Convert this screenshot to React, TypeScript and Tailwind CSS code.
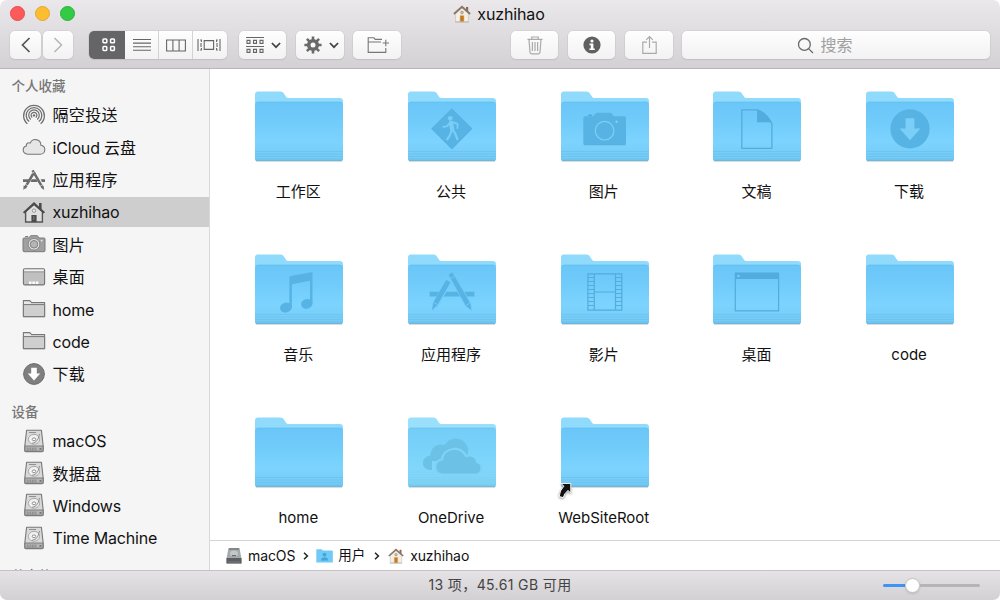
import type { ReactNode } from "react";

const G = "#6b6b6b";

function FolderBase({ light, id, children }: { light?: boolean; id: string; children?: ReactNode }) {
  return (
    <svg width="88" height="74" viewBox="0 0 88 74" className="block overflow-visible">
      <defs>
        <linearGradient id={id} x1="0" y1="0" x2="0" y2="1">
          <stop offset="0" stopColor={light ? "#74cdf7" : "#6ac6f8"} />
          <stop offset="0.3" stopColor={light ? "#77d1f9" : "#70cbfa"} />
          <stop offset="0.68" stopColor={light ? "#80d7fb" : "#7cd3fe"} />
          <stop offset="1" stopColor={light ? "#7fd2f4" : "#74caf4"} />
        </linearGradient>
      </defs>
      <path d="M1 70.1H87" stroke="#000" strokeOpacity=".14" strokeWidth="1.6" />
      <path d="M0 12V3.6C0 1.6 1 .5 3 .5H25C27 .5 28.2 1.3 29.2 2.9L30.7 5.3C31.7 6.8 32.5 7 34.2 7H84.6C87 7 88 8.2 88 10.2V20H0Z" fill={light ? "#9be0fa" : "#90dafc"} />
      <path d="M0 14.2C0 12 1 10.8 3.2 10.8H84.8C87 10.8 88 12 88 14.2V68C88 69.2 87.3 69.8 86.2 69.8H1.8C.7 69.8 0 69.2 0 68Z" fill={`url(#${id})`} />
      <path d="M.5 12.6Q1.2 11.1 3.4 11.1H84.6Q86.8 11.1 87.5 12.6" fill="none" stroke="#56b2e4" strokeOpacity=".5" strokeWidth=".6" />
      <path d="M0 60.5H88M0 63H88M0 65.5H88" stroke="#4ea7d8" strokeOpacity={light ? 0.1 : 0.3} strokeWidth=".8" />
      <path d="M0 67.8H88" stroke="#4ea7d8" strokeOpacity=".18" strokeWidth="1" />
      <path d="M.7 69.3H87.3" stroke="#4b9fcc" strokeOpacity=".7" strokeWidth=".9" />
      {children}
    </svg>
  );
}

const M = "#57b3e3";

const glyphs: Record<string, ReactNode> = {
  pub: (
    <g>
      <path d="M43.8 17.8L64 37.7L43.8 58L23.7 37.7Z" fill={M} stroke="#4eaadb" strokeWidth=".7" strokeLinejoin="round" />
      <g stroke="#79cdf6" fill="none" strokeLinecap="round" strokeLinejoin="round">
        <circle cx="42.2" cy="27.3" r="2.4" fill="#79cdf6" stroke="none" />
        <path d="M43 32L44.2 38.6" strokeWidth="4.4" />
        <path d="M42 31.5L38.8 35.4L35.2 35.8" strokeWidth="1.8" />
        <path d="M45 31.2L49.6 33.2L49.4 37" strokeWidth="1.8" />
        <path d="M43.4 40L42 44L39.2 48.4" strokeWidth="2.2" />
        <path d="M45.2 39.5L47.4 43L49.4 48.3" strokeWidth="2.2" />
      </g>
    </g>
  ),
  pic: (
    <g>
      <path d="M24 25.3H31.5C33.8 25.3 33.5 21.8 36.3 21.8H49C51.8 21.8 51.6 25.3 53.8 25.3H63.5Q65 25.3 65 27V52Q65 53.8 63.3 53.8H24Q22.3 53.8 22.3 52V27Q22.3 25.3 24 25.3Z" fill={M} />
      <path d="M27 24.7Q27.4 23.6 29 23.6Q31 23.6 31.4 24.7Z" fill="#459fce" />
      <circle cx="43.6" cy="39.7" r="9.3" fill="none" stroke="#7ccff8" strokeWidth="1.2" />
      <circle cx="55.6" cy="30.8" r="1.2" fill="#7ccff8" />
      <path d="M22.5 53.8H64.8" stroke="#49a5d5" strokeWidth=".6" />
    </g>
  ),
  doc: (
    <g>
      <path d="M28.8 18.9H44.4Q54 22 58.9 33V57.3H28.8Z" fill="none" stroke="#52acdd" strokeWidth="1.3" />
      <path d="M44 18.8Q54 21.5 59.2 32.8L57 31.3H44Z" fill="#52acdd" />
    </g>
  ),
  down: (
    <g>
      <circle cx="44" cy="37.8" r="19.6" fill={M} />
      <path d="M39.6 27.2H48.4V37.5H54.4L44 49.2L33.6 37.5H39.6Z" fill="#7acff9" />
    </g>
  ),
  music: (
    <g fill={M}>
      <path d="M34.4 22.3L57.5 18V49.5H55V26.8L36.9 30.3V53.5H34.4Z" />
      <ellipse cx="31" cy="53.6" rx="6" ry="4.9" transform="rotate(-15 31 53.6)" />
      <ellipse cx="51.8" cy="49.8" rx="5.8" ry="4.8" transform="rotate(-15 51.8 49.8)" />
    </g>
  ),
  apps: (
    <g>
      <path d="M21.7 37.7H66.4V42.5H21.7Z" fill={M} />
      <path d="M27 52L41 26" stroke="#75cdfa" strokeWidth="6.6" fill="none" />
      <path d="M38.2 25.8L42.6 28.2L29.6 50.8L24 56.6L25.2 48.6Z" fill={M} />
      <path d="M40 20.5L44.6 17.8L62.7 49.2L64 57L57.5 52.1Z" fill={M} stroke="#75cdfa" strokeWidth=".8" />
      <path d="M42 25L46.4 22.4M25.6 48.4L29.8 50.8M57.7 51.5L62 49" stroke="#75cdfa" strokeWidth=".8" />
    </g>
  ),
  film: (
    <g fill="none" stroke="#52acdd" strokeWidth="1.2">
      <path d="M26.9 19.8H60.8V56.2H26.9ZM33.3 19.8V56.2M54.5 19.8V56.2M33.3 38H54.5" />
      <path d="M27 23.5H33M27 27.5H33M27 31.5H33M27 35.5H33M27 39.5H33M27 43.5H33M27 47.5H33M27 51.5H33M54.5 23.5H61M54.5 27.5H61M54.5 31.5H61M54.5 35.5H61M54.5 39.5H61M54.5 43.5H61M54.5 47.5H61M54.5 51.5H61" />
    </g>
  ),
  desk: (
    <g>
      <path d="M22.3 19.2H65.6V56.9H22.3Z" fill="none" stroke="#52acdd" strokeWidth="1.2" />
      <path d="M22 19H66V25H22Z" fill="#52acdd" />
      <circle cx="25.5" cy="22" r="1.2" fill="#7bd0f8" />
    </g>
  ),
  cloud: (
    <g>
      <path d="M24 53H22C13 52.5 12 40.4 22.4 38.6C22.7 30 29.8 26 36.5 28.2C43 17.5 57.5 20.5 60 32V44H24Z" fill="#6cc1e7" />
      <path d="M35 57.5C25.2 57.5 24.5 44 34 42.4C35.5 30 53.5 28.2 58 39C64.5 37 69 40.5 69 45C75.5 47 75.2 57.5 67.5 57.5Z" fill="#6cc1e7" stroke="#7dd4f8" strokeWidth="2.2" />
    </g>
  ),
  alias: (
    <path d="M0 66.4H9.8V76.2L7 73.4Q3.4 76.4 2.2 80.6L-1.8 79.6Q-1.6 73.6 2.8 69.2Z" fill="#111" stroke="#fff" strokeWidth="1" style={{ filter: "drop-shadow(0 1px 1px #999)" }} />
  ),
};

const folders = [
  ["工作区", ""], ["公共", "pub"], ["图片", "pic"], ["文稿", "doc"], ["下载", "down"],
  ["音乐", "music"], ["应用程序", "apps"], ["影片", "film"], ["桌面", "desk"], ["code", ""],
  ["home", ""], ["OneDrive", "cloud"], ["WebSiteRoot", "alias"],
];

const Disk = () => (
  <svg width="22" height="24" viewBox="0 0 22 24">
    <path d="M3.6 1.2H18.4L20.2 17V21.4Q20.2 22.6 19 22.6H3Q1.8 22.6 1.8 21.4V17Z" fill="#d9d9d9" stroke="#777" strokeWidth="1.1" strokeLinejoin="round" />
    <path d="M2 17H20V22.2H2Z" fill="#b5b5b5" stroke="#777" strokeWidth=".9" />
    <path d="M4.3 18.5V21.5M6 18.5V21.5M7.7 18.5V21.5M9.4 18.5V21.5M11.1 18.5V21.5M12.8 18.5V21.5" stroke="#777" strokeWidth=".7" />
    <path d="M16.5 19.9H18.5" stroke="#555" strokeWidth="1.2" />
    <ellipse cx="11" cy="10.3" rx="5.6" ry="4.9" fill="#f1f1f1" stroke="#999" strokeWidth=".8" />
    <ellipse cx="11" cy="10.3" rx="1.8" ry="1.4" fill="#fff" stroke="#888" strokeWidth=".9" />
    <path d="M6 3.5H13M16.6 5L15 10Q14 13.5 9 14.4" stroke="#888" strokeWidth=".9" fill="none" />
  </svg>
);

const FolderSm = () => (
  <svg width="24" height="20" viewBox="0 0 24 20">
    <path d="M1.4 17.6V1.6H7.8L9.6 3.6H22.6V17.6Z" fill="#e8e8e8" stroke="#777" strokeWidth="1.1" strokeLinejoin="round" />
    <path d="M1.4 5.6H22.6V17.6H1.4Z" fill="#cfcfcf" stroke="#777" strokeWidth="1" />
  </svg>
);

const side: Record<string, ReactNode> = {
  air: (
    <svg width="24" height="24" viewBox="0 0 24 24" fill="none" stroke="#6f6f6f" strokeWidth="1.25">
      <path d="M5.4 20.7A10.4 10.4 0 1 1 18.6 20.7M7.2 18.6A7.8 7.8 0 1 1 16.8 18.6M8.8 16.5A5.3 5.3 0 1 1 15.2 16.5M10.3 14.6A2.9 2.9 0 1 1 13.7 14.6" />
      <circle cx="12" cy="12.4" r="1.2" fill={G} stroke="none" />
    </svg>
  ),
  cloud: (
    <svg width="24" height="20" viewBox="0 0 24 20">
      <path d="M5.8 17.3C2.8 17.3 1.2 15.2 1.2 13C1.2 10.8 2.6 9.4 4.3 9C4 6.6 6.2 5.2 8.2 6.1C9.4 3.4 11.6 2.3 14 2.6C17.1 3 18.9 5.3 18.9 8.3C21.3 8.6 22.8 10.4 22.8 12.7C22.8 15.3 20.8 17.3 18.2 17.3Z" fill="#e6e6e6" stroke="#777" strokeWidth="1.1" />
    </svg>
  ),
  apps: (
    <svg width="24" height="24" viewBox="0 0 24 24">
      <path d="M1 12.3H7L5.7 15H1ZM9.7 12.3H14.3L15.7 15H8.5ZM18.6 12.3H23V15H20Z" fill={G} />
      <path d="M2.8 21.2L12.5 4.5M10.6 3.4L20.3 20.2" stroke={G} strokeWidth="2.5" />
      <path d="M1.6 18.4L4.4 20.1L1.4 23ZM18.8 20.4L21.5 18.8L22.2 23Z" fill={G} />
      <path d="M10 6.4L12.6 4.8M17.7 19.5L20.6 17.8M3.4 17.4L6 18.8" stroke="#eee" strokeWidth=".7" />
    </svg>
  ),
  house: (
    <svg width="24" height="24" viewBox="0 0 24 24">
      <path d="M3.6 11.6L12 4.1L20.4 11.6V22H3.6Z" fill="#dedede" stroke="#555" strokeWidth="1.4" />
      <path d="M17 3H19.6V9H17Z" fill="#4b4b4b" />
      <path d="M.9 12.2L12 2L23.1 12.2L21.6 13.4L12 5.3L2.4 13.4Z" fill="#4b4b4b" />
      <path d="M9.4 15H14.6V22H9.4Z" fill="#4b4b4b" />
      <path d="M11 17H12.5M11 19H12.5" stroke="#999" strokeWidth=".8" />
      <circle cx="12" cy="10.7" r="1.7" fill="#eee" stroke="#777" strokeWidth=".7" />
    </svg>
  ),
  camera: (
    <svg width="24" height="20" viewBox="0 0 24 20">
      <path d="M2 4H7L8.6 1.7H15.4L17 4H22Q23 4 23 5V16.5Q23 17.7 22 17.7H2Q1 17.7 1 16.5V5Q1 4 2 4Z" fill="#a0a0a0" stroke="#7b7b7b" strokeWidth="1" />
      <path d="M3.2 2.6H6.2" stroke={G} />
      <circle cx="12" cy="10.3" r="5.8" fill="#e4e4e4" stroke="#777" strokeWidth=".8" />
      <circle cx="12" cy="10.3" r="3.8" fill="#b5b5b5" stroke="#777" strokeWidth=".9" />
      <circle cx="19.6" cy="6.6" r=".9" fill="#eee" />
    </svg>
  ),
  desk: (
    <svg width="24" height="20" viewBox="0 0 24 20">
      <rect x="1.4" y="1.7" width="21.2" height="16.2" rx="1.4" fill="#c0c0c0" stroke="#747474" strokeWidth="1.1" />
      <path d="M2.2 3.4H21.8" stroke="#f2f2f2" strokeWidth="1.8" />
      <path d="M7 15.7H17" stroke="#fff" strokeWidth="2.4" strokeDasharray="2.5 .9" />
      <path d="M1.6 4.9H22.4" stroke="#888" strokeWidth=".7" />
    </svg>
  ),
  folder: <FolderSm />,
  down: (
    <svg width="24" height="24" viewBox="0 0 24 24">
      <circle cx="12" cy="12" r="10.4" fill="#7f7f7f" stroke="#6c6c6c" />
      <path d="M9.2 5.8H14.8V11.4H18.2L12 18.6L5.8 11.4H9.2Z" fill="#fff" />
    </svg>
  ),
  disk: <Disk />,
};

const ColorHouse = ({ size }: { size: number }) => (
  <svg width={size} height={size} viewBox="0 0 18 18">
    <path d="M13 2H15.2V7H13Z" fill="#8b6955" />
    <path d="M2.6 8.6L9 3L15.4 8.6V16.8H2.6Z" fill="#f4f0e7" stroke="#c9c3ba" strokeWidth=".7" />
    <path d="M.9 9L9 1.8L17.1 9" fill="none" stroke="#8b7567" strokeWidth="1.8" />
    <path d="M7 10.5H11V16.8H7Z" fill="#c17924" stroke="#e5bd79" strokeWidth=".6" />
    <circle cx="9" cy="7.5" r="1.4" fill="#cfc5b3" stroke="#8a8275" strokeWidth=".6" />
    <path d="M2 17H16" stroke="#aaa" strokeWidth=".7" />
  </svg>
);

const Btn = ({ className, children }: { className: string; children: ReactNode }) => (
  <div className={`flex h-[28px] shrink-0 items-center rounded-[5px] bg-linear-to-b from-[#fefefe] to-[#f3f2f3] shadow-[0_0_0_0.5px_#cac8ca,0_1px_1px_#bbb9bb] ${className}`}>{children}</div>
);

const Chevron = () => (
  <svg width="10" height="7" viewBox="0 0 10 7" fill="none" stroke="#444" strokeWidth="1.7"><path d="M.9 1L5 5.2L9.1 1" /></svg>
);

const SideItem = ({ icon, label, active }: { icon: string; label: string; active?: boolean }) => (
  <div className="flex h-[32.4px] items-center">
    <div className={`flex h-[29.5px] w-full items-center pl-[21.5px] ${active ? "bg-[#cecece]" : ""}`}>
      <div className="flex w-[24px] justify-center">{side[icon]}</div>
      <span className={`ml-[7px] whitespace-nowrap pt-[1px] text-[16px] leading-none ${/^[A-Za-z]/.test(label) ? "tracking-[-0.17px]" : "tracking-[0.35px]"}`}>{label}</span>
    </div>
  </div>
);

const Arrow = () => (
  <svg width="6" height="8" viewBox="0 0 6 8" fill="none" stroke="#222" strokeWidth="1.5"><path d="M1 .8L4.4 4L1 7.2" /></svg>
);

export default function App() {
  return (
    <div className="h-[600px] w-[1000px] overflow-hidden bg-white font-['Inter','Noto_Sans_CJK_SC',sans-serif] text-[#111]">
      <div className="flex h-full flex-col overflow-hidden rounded-[7px] bg-white">
        <header className="flex h-[69px] shrink-0 flex-col border-b border-[#b8b5b9] bg-linear-to-b from-[#ebe8eb] to-[#d4d1d5]">
          <div className="grid h-[31px] grid-cols-[200px_1fr_200px] items-center pb-[4px]">
            <div className="flex gap-[10px] pl-[10px]">
              <span className="size-[15px] rounded-full border border-[#e9494c] bg-[#fc5a5b]" />
              <span className="size-[15px] rounded-full border border-[#e3a63a] bg-[#fdbd30]" />
              <span className="size-[15px] rounded-full border border-[#29b13a] bg-[#33cb44]" />
            </div>
            <div className="flex items-center justify-center gap-[6px] pr-[2px] pt-[1px] text-[16px] leading-none tracking-[-0.12px]">
              <ColorHouse size={18} />
              <span>xuzhihao</span>
            </div>
          </div>
          <div className="flex pl-[10px]">
            <Btn className="w-[31px] justify-center"><svg width="10" height="16" viewBox="0 0 10 16" fill="none" stroke="#555" strokeWidth="1.7"><path d="M8.5 1L1.5 8L8.5 15" /></svg></Btn>
            <Btn className="ml-[2px] w-[30px] justify-center"><svg width="10" height="16" viewBox="0 0 10 16" fill="none" stroke="#b5b5b5" strokeWidth="1.5"><path d="M1.5 1L8.5 8L1.5 15" /></svg></Btn>
            <Btn className="ml-[16px] w-[138px] justify-center overflow-hidden">
              <div className="flex h-full w-[36px] items-center justify-center bg-[#656466] pl-[3px]">
                <svg width="14" height="14" viewBox="0 0 14 14" fill="none" stroke="#fff" strokeWidth="1.5"><rect x="1" y="1" width="3.8" height="3.8" rx=".8" /><rect x="8.6" y="1" width="3.8" height="3.8" rx=".8" /><rect x="1" y="8.6" width="3.8" height="3.8" rx=".8" /><rect x="8.6" y="8.6" width="3.8" height="3.8" rx=".8" /></svg>
              </div>
              <div className="flex h-full w-[34px] items-center justify-center border-r border-[#d4d3d4]">
                <svg width="18" height="14" viewBox="0 0 18 14" stroke="#666" strokeWidth="1.1"><path d="M0 1.5H18M0 5.1H18M0 8.7H18M0 12.3H18" /></svg>
              </div>
              <div className="flex h-full w-[34px] items-center justify-center border-r border-[#d4d3d4]">
                <svg width="20" height="13" viewBox="0 0 20 13" fill="none" stroke="#666" strokeWidth="1.1"><path d="M.6 1H19.4V12H.6ZM6.9 1V12M13.1 1V12" /></svg>
              </div>
              <div className="flex h-full w-[34px] items-center justify-center pr-[2px]">
                <svg width="24" height="14" viewBox="0 0 24 14" fill="none" stroke="#666" strokeWidth="1.1"><path d="M7.2 2.6H16.6V11.4H7.2ZM1 1V13M23 1V13M3.2 2H4.4V4M4.4 10V12H3.2M4 5V9M20.8 2H19.6V4M19.6 10V12H20.8M20 5V9" /></svg>
              </div>
            </Btn>
            <Btn className="ml-[12px] w-[47px] gap-[7px] pl-[7px]">
              <svg width="18" height="18" viewBox="0 0 18 18" fill="none" stroke="#666" strokeWidth="1.1"><path d="M0 1.5H18M0 10.5H18" /><path d="M1 4.4H4V7.4H1ZM7.5 4.4H10.5V7.4H7.5ZM14 4.4H17V7.4H14ZM1 13.4H4V16.4H1ZM7.5 13.4H10.5V16.4H7.5ZM14 13.4H17V16.4H14Z" /></svg>
              <Chevron />
            </Btn>
            <Btn className="ml-[10px] w-[48px] gap-[7px] pl-[8px]">
              <svg width="18" height="18" viewBox="0 0 18 18"><g stroke="#6a6a6a" strokeWidth="2.6"><path d="M9 .4V17.6M.4 9H17.6M2.9 2.9L15.1 15.1M15.1 2.9L2.9 15.1" /></g><circle cx="9" cy="9" r="6.1" fill="#6a6a6a" /><circle cx="9" cy="9" r="2.5" fill="#fafafa" /></svg>
              <Chevron />
            </Btn>
            <Btn className="ml-[9px] w-[48px] justify-center pl-[2px]">
              <svg width="23" height="17" viewBox="0 0 23 17" fill="none" stroke="#777" strokeWidth="1.1"><path d="M15 2.4H8.2L7 .8H1.2V15.4H18.8V11M1.2 5H14M18.8 2.8V9.2M15.7 6H22" /></svg>
            </Btn>
            <Btn className="ml-[110px] w-[47px] justify-center">
              <svg width="16" height="19" viewBox="0 0 16 19" fill="none" stroke="#aaa" strokeWidth="1.2"><path d="M.5 3.4H15.5M4.8 3.2V1H11.2V3.2M2 3.4L3 16.3Q3.1 17.9 4.6 17.9H11.4Q12.9 17.9 13 16.3L14 3.4M5.4 6V15M8 6V15M10.6 6V15" /></svg>
            </Btn>
            <Btn className="ml-[10px] w-[47px] justify-center">
              <svg width="18" height="18" viewBox="0 0 18 18"><circle cx="9" cy="9" r="8.6" fill="#606060" /><circle cx="9" cy="5" r="1.6" fill="#fff" /><path d="M6.5 7.6H10.4V12.4H11.8V14H6.4V12.4H7.8V9.2H6.5Z" fill="#fff" /></svg>
            </Btn>
            <Btn className="ml-[10px] w-[48px] justify-center">
              <svg width="15" height="20" viewBox="0 0 15 20" fill="none" stroke="#aaa" strokeWidth="1.2"><path d="M5 7.2H.8V18.4H14.2V7.2H10M7.5 13V1.5M4.2 4.8L7.5 1.5L10.8 4.8" /></svg>
            </Btn>
            <Btn className="ml-[9px] w-[308px] justify-center gap-[6px] pr-[22px]">
              <svg width="17" height="17" viewBox="0 0 17 17" fill="none" stroke="#6a6a6a" strokeWidth="1.3"><circle cx="7.4" cy="7.4" r="5.9" /><path d="M11.6 11.6L16 16" /></svg>
              <span className="text-[16px] leading-none text-[#a0a0a0]">搜索</span>
            </Btn>
          </div>
        </header>

        <div className="flex min-h-0 flex-1">
          <aside className="w-[210px] shrink-0 overflow-hidden border-r border-[#d9d9d9] bg-[#f5f5f5] pt-[9px]">
            <div className="h-[20.5px] pl-[11.5px] text-[13.5px] font-medium leading-[16px] text-[#777]">个人收藏</div>
            <SideItem icon="air" label="隔空投送" />
            <SideItem icon="cloud" label="iCloud 云盘" />
            <SideItem icon="apps" label="应用程序" />
            <SideItem icon="house" label="xuzhihao" active />
            <SideItem icon="camera" label="图片" />
            <SideItem icon="desk" label="桌面" />
            <SideItem icon="folder" label="home" />
            <SideItem icon="folder" label="code" />
            <SideItem icon="down" label="下载" />
            <div className="mt-[13.5px] h-[21px] pl-[11.5px] text-[13.5px] font-medium leading-[16px] text-[#777]">设备</div>
            <SideItem icon="disk" label="macOS" />
            <SideItem icon="disk" label="数据盘" />
            <SideItem icon="disk" label="Windows" />
            <SideItem icon="disk" label="Time Machine" />
            <div className="mt-[14px] pl-[11.5px] text-[13.5px] font-medium leading-[16px] text-[#777]">共享的</div>
          </aside>

          <div className="flex min-w-0 flex-1 flex-col">
            <main className="grid min-h-0 flex-1 auto-rows-[163px] grid-cols-[repeat(5,152.7px)] overflow-hidden pl-[13px] pt-[22px]">
              {folders.map(([name, g], i) => (
                <div key={name} className="flex flex-col items-center">
                  <FolderBase id={`f${i}`} light={g === "cloud"}>{g ? glyphs[g] : null}</FolderBase>
                  <span className="mt-[17px] pr-[2px] text-[15px] leading-[20px]">{name}</span>
                </div>
              ))}
            </main>
            <div className="flex h-[30px] shrink-0 items-center border-t border-[#d4d4d4] pl-[16px] text-[14px] leading-none tracking-[-0.1px]">
              <svg width="16" height="16" viewBox="0 0 16 16"><path d="M2.5 0H13.5L15.5 10.5V15.5H.5V10.5Z" fill="#a4a9ab" /><path d="M.5 10H15.5V15.5H.5Z" fill="#5b5f61" /><path d="M3 1H13" stroke="#666" /><ellipse cx="8" cy="5.5" rx="4" ry="3" fill="#c2c7c8" /><path d="M6 7.7H10" stroke="#555" /><path d="M2 14H14" stroke="#888" strokeWidth=".7" /></svg>
              <span className="ml-[6px] pt-[1px]">macOS</span>
              <span className="ml-[8px] mr-[7px] pt-[1px]"><Arrow /></span>
              <svg width="17" height="14" viewBox="0 0 17 14"><path d="M.3 1Q.3 .3 1 .3H5.5L7 1.6H16.2Q16.8 1.6 16.8 2.3V13.5H.3Z" fill="#70caf5" /><circle cx="8.5" cy="5.6" r="1.9" fill="#41a7da" /><path d="M5 11.4Q5 8.2 8.5 8.2Q12 8.2 12 11.4Z" fill="#41a7da" /></svg>
              <span className="ml-[5px] pt-[1px] text-[13.5px]">用户</span>
              <span className="ml-[9px] mr-[8px] pt-[1px]"><Arrow /></span>
              <ColorHouse size={16} />
              <span className="ml-[6px] pt-[1px]">xuzhihao</span>
            </div>
          </div>
        </div>

        <footer className="grid h-[30px] shrink-0 grid-cols-[200px_1fr_200px] items-center border-t border-[#c4c2c4] bg-linear-to-b from-[#e5e3e6] to-[#d2d0d3]">
          <span />
          <span className="pb-[1px] text-center text-[14px] leading-none tracking-[0.38px] text-[#444]">13 项，45.61 GB 可用</span>
          <div className="flex items-center pl-[83px]">
            <span className="h-[3px] w-[22px] rounded-l-full bg-[#3d94f5]" />
            <span className="size-[15px] rounded-full border border-[#c4c4c4] bg-white shadow-sm" />
            <span className="h-[3px] w-[60px] rounded-r-full bg-[#b6b4b7]" />
          </div>
        </footer>
      </div>
    </div>
  );
}
